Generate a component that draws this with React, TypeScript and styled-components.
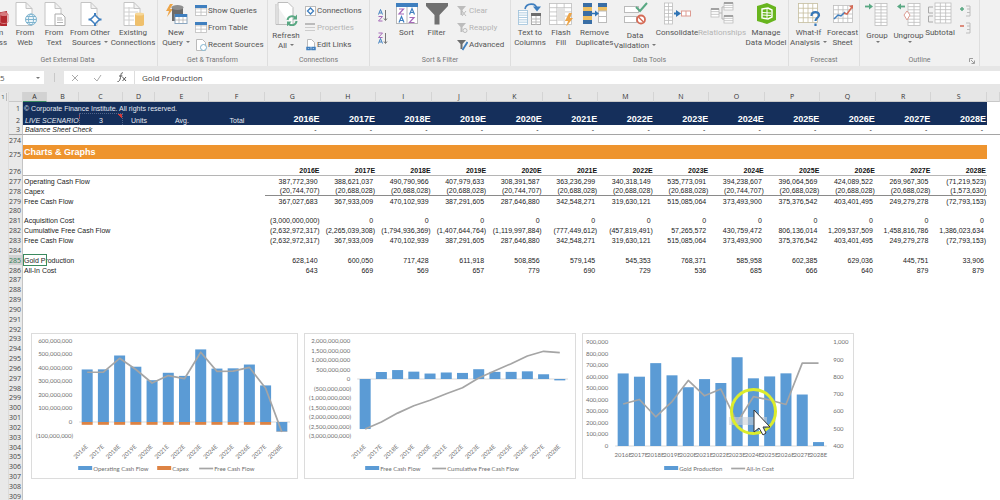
import React from "react";
import styled, { createGlobalStyle, css } from "styled-components";

const GlobalStyle = createGlobalStyle`
  *, *::before, *::after { box-sizing: border-box; }
  body { margin: 0; background: #fff; font-family: Roboto, "Open Sans", sans-serif; color: #555; }
  button, input { font: inherit; color: inherit; border: 0; padding: 0; margin: 0; background: none; }
`;

/* ---------- Shell ---------- */

const Page = styled.div`
  height: 100vh;
  overflow: hidden;
  display: flex;
  flex-direction: column;
`;

const Ribbon = styled.header`
  display: flex;
  flex: none;
  height: 66px;
  background: #f1f1f1;
  overflow: hidden;
`;

const Group = styled.section<{ $w: number; $pull?: boolean }>`
  position: relative;
  display: flex;
  flex-direction: column;
  flex: none;
  width: ${(p) => p.$w}px;
  margin-left: ${(p) => (p.$pull ? -22 : 0)}px;
  border-right: 1px solid #dedede;
`;

const GroupBody = styled.div`
  display: flex;
  height: 55px;
  padding: 2px 0 0 1px;
`;

const GroupTitle = styled.h2`
  margin: 0;
  font-size: 7px;
  line-height: 10px;
  font-weight: 400;
  text-align: center;
  color: #777;
`;

const BigButton = styled.button<{ $w: number; $split?: boolean; $off?: boolean }>`
  display: flex;
  flex-direction: column;
  align-items: center;
  flex: none;
  width: ${(p) => p.$w}px;
  gap: ${(p) => (p.$split ? 5 : 2)}px;
  font-size: 8px;
  line-height: 10px;
  white-space: nowrap;
  color: ${(p) => (p.$off ? "#b4b4b4" : "#555")};
`;

const ButtonText = styled.span`
  display: flex;
  flex-direction: column;
  align-items: center;
`;

const Caret = styled.i`
  display: inline-block;
  margin-left: 3px;
  vertical-align: 2px;
  border: 2px solid transparent;
  border-top-color: #777;
  border-bottom: 0;
`;

const SmallColumn = styled.div<{ $gap?: number }>`
  display: flex;
  flex-direction: column;
  padding-left: ${(p) => p.$gap ?? 2}px;
`;

const SmallButton = styled.button<{ $off?: boolean }>`
  display: flex;
  align-items: center;
  gap: 1px;
  height: 17px;
  font-size: 8px;
  white-space: nowrap;
  color: ${(p) => (p.$off ? "#b4b4b4" : "#555")};
`;

const IconStack = styled.div`
  display: flex;
  flex-direction: column;
  gap: 6px;
  width: 20px;
  padding: 5px 0 0 4px;
`;

const IconButton = styled.button`
  display: block;
  height: 17px;
`;

const Launcher = styled.button`
  position: absolute;
  right: 4px;
  bottom: 2px;
  line-height: 0;
`;

const FormulaBar = styled.div`
  display: flex;
  flex: none;
  height: 26px;
  padding: 5px 0 8px;
  background: #e6e6e6;
  font-family: "Open Sans", sans-serif;
  font-size: 8px;
`;

const NameBox = styled.div`
  display: flex;
  align-items: center;
  width: 44px;
  padding-right: 4px;
  background: #fff;
`;

const NameInput = styled.input`
  flex: 1;
  min-width: 0;
`;

const Grip = styled.span`
  width: 20px;
  margin: 2px 0;
  background: linear-gradient(#c8c8c8, #c8c8c8) center / 1px 100% no-repeat;
`;

const EditTools = styled.div`
  display: flex;
  align-items: center;
  justify-content: space-around;
  width: 71px;
  border-right: 1px solid #ddd;
  background: #fff;
`;

const EditButton = styled.button`
  line-height: 0;
`;

const FormulaInput = styled.input`
  flex: 1;
  min-width: 0;
  padding-left: 7px;
  background: #fff;
  color: #444;
`;

/* ---------- Sheet ---------- */

const Sheet = styled.main`
  position: relative;
  display: flex;
  flex: 1;
  min-height: 0;
`;

const Gutter = styled.aside`
  width: 9px;
  flex: none;
  background: #e9e9e9;
  border-right: 1px solid #dcdcdc;
`;

const LevelButton = styled.button`
  display: block;
  width: 7px;
  height: 8px;
  margin-top: 1px;
  border-right: 1px solid #bbb;
  font-size: 6px;
  line-height: 8px;
`;

const Grid = styled.table`
  flex: 1;
  width: 100%;
  align-self: flex-start;
  table-layout: fixed;
  border-collapse: separate;
  border-spacing: 0;
  font: 7px/9px "Liberation Sans", Arial, sans-serif;
  color: #222;

  th, td { padding: 0; white-space: nowrap; }
`;

const Col = styled.col<{ $w?: number }>`
  ${(p) => p.$w && css`width: ${p.$w}px;`}
`;

const ColHead = styled.th<{ $active?: boolean }>`
  height: 10px;
  font: 400 7px/9px "Open Sans", sans-serif;
  color: #333;
  background: ${(p) => (p.$active ? "#d2d2d2" : "#e6e6e6")};
  border-right: 1px solid #d4d4d4;
  border-bottom: 1px solid ${(p) => (p.$active ? "#3b8a5f" : "#c8c8c8")};
`;

const Row = styled.tr<{ $h?: number }>`
  height: ${(p) => p.$h ?? 10}px;
`;

const RowHead = styled.th<{ $active?: boolean; $frozen?: boolean }>`
  font: 400 7px/9px "Open Sans", sans-serif;
  color: ${(p) => (p.$active ? "#2f7d54" : "#444")};
  background: ${(p) => (p.$active ? "#d2d2d2" : "#e9e9e9")};
  border-right: 1px solid #c4c4c4;
  ${(p) => p.$frozen && css`border-bottom: 1px solid #a5a5a5;`}
  text-align: right;
  vertical-align: bottom;
`;

const Cell = styled.td<{ $tone?: "navy" | "orange"; $align?: string; $line?: string; $strong?: boolean; $italic?: boolean }>`
  vertical-align: bottom;
  text-align: ${(p) => p.$align ?? "left"};
  ${(p) => p.$tone === "navy" && css`background: #152f5b; color: #e6eaf2;`}
  ${(p) => p.$tone === "orange" && css`background: #ee942e; color: #fff;`}
  ${(p) => p.$line && css`border-bottom: 1px solid ${p.$line};`}
  ${(p) => p.$strong && css`font-weight: 700; color: #111;`}
  ${(p) => p.$italic && css`font-style: italic;`}
`;

const Inset = styled.span<{ $l?: number; $r?: number }>`
  padding-left: ${(p) => p.$l ?? 0}px;
  padding-right: ${(p) => p.$r ?? 0}px;
`;

const YearTitle = styled.b`
  padding-right: 1px;
  font-size: 9px;
  line-height: 12px;
  color: #fff;
`;

const SectionTitle = styled.b`
  padding-left: 1px;
  font-size: 9px;
  line-height: 13px;
`;

const ScenarioCell = styled(Cell)`
  background: linear-gradient(225deg, #d33a3a 3px, transparent 3px) #152f5b;
  border: 1px dotted #51668b;
  border-width: 1px 1px 0;
`;

const SelectedCell = styled(Cell)`
  position: relative;

  &::before {
    content: "";
    position: absolute;
    left: 0;
    top: -1px;
    width: 24px;
    height: 12px;
    border: 1px solid #3b8a5f;
  }
`;

/* ---------- Charts ---------- */

const ChartLayer = styled.div`
  position: absolute;
  top: 241px;
  left: 31px;
  right: 146px;
  display: flex;
  gap: 6px;
`;

const ChartCard = styled.figure<{ $grow: number }>`
  flex: ${(p) => p.$grow} 1 0;
  min-width: 0;
  margin: 0;
  height: 146px;
  background: #fff;
  border: 1px solid #dcdcdc;
`;

const ChartSvg = styled.svg`
  display: block;
  width: 100%;
  height: 100%;
  overflow: visible;
  font: 6px Lato, sans-serif;
  fill: #6e6e6e;
`;

const Pointer = styled.svg`
  position: absolute;
  top: 296px;
  left: 729px;
  width: 48px;
  height: 48px;
  pointer-events: none;
`;

/* ---------- Data ---------- */

const years = Array.from({ length: 13 }, (_, i) => `${2016 + i}E`);
const operating = [387772390, 388621037, 490790966, 407979633, 308391587, 363236299, 340318149, 535773091, 394238607, 396064569, 424089522, 269967305, -71219523];
const capex = [-20744707, -20688028, -20688028, -20688028, -20744707, -20688028, -20688028, -20688028, -20744707, -20688028, -20688028, -20688028, -1573630];
const free = [367027683, 367933009, 470102939, 387291605, 287646880, 342548271, 319630121, 515085064, 373493900, 375376542, 403401495, 249279278, -72793153];
const acquisition = [-3000000000, 0, 0, 0, 0, 0, 0, 0, 0, 0, 0, 0, 0];
const cumulative = [-2632972317, -2265039308, -1794936369, -1407644764, -1119997884, -777449612, -457819491, 57265572, 430759472, 806136014, 1209537509, 1458816786, 1386023634];
const freeNet = [-2632972317, ...free.slice(1)];
const gold = [628140, 600050, 717428, 611918, 508856, 579145, 545353, 768371, 585958, 602385, 629036, 445751, 33906];
const allIn = [643, 669, 569, 657, 779, 690, 729, 536, 685, 666, 640, 879, 879];

const fmt = (n: number) => (n < 0 ? `(${Math.abs(n).toLocaleString("en-US")})` : n.toLocaleString("en-US"));

type Line = { n: number; label?: string; values?: number[]; line?: boolean };
const body: Line[] = [
  { n: 277, label: "Operating Cash Flow", values: operating },
  { n: 278, label: "Capex", values: capex, line: true },
  { n: 279, label: "Free Cash Flow", values: free },
  { n: 280 },
  { n: 281, label: "Acquisition Cost", values: acquisition },
  { n: 282, label: "Cumulative Free Cash Flow", values: cumulative },
  { n: 283, label: "Free Cash Flow", values: freeNet },
  { n: 284 },
  { n: 285, label: "Gold Production", values: gold },
  { n: 286, label: "All-In Cost", values: allIn },
  ...Array.from({ length: 23 }, (_, i) => ({ n: 287 + i })),
];
const shortRows = [280, 287, 293, 299, 305];

/* ---------- Icons ---------- */

const Icon = ({ w = 26, h = 24, children }: { w?: number; h?: number; children: React.ReactNode }) => (
  <svg width={w} height={h} viewBox={`0 0 ${w} ${h}`} fill="none" aria-hidden="true">{children}</svg>
);

const Paper = () => <path d="M4 .5h10l6 6V23.500H4zM14 .5v6h6" fill="#fff" stroke="#c4c4c4" />;

const Lines = ({ x, y, w, h, c = "#bdbdbd", cols = 3, rows = 5 }: { x: number; y: number; w: number; h: number; c?: string; cols?: number; rows?: number }) => (
  <g stroke={c} strokeWidth="0.8">
    <rect x={x} y={y} width={w} height={h} fill="#fff" />
    {Array.from({ length: cols - 1 }, (_, i) => <path key={`c${i}`} d={`M${x + ((i + 1) * w) / cols} ${y}v${h}`} />)}
    {Array.from({ length: rows - 1 }, (_, i) => <path key={`r${i}`} d={`M${x} ${y + ((i + 1) * h) / rows}h${w}`} />)}
  </g>
);

const AccessIcon = () => <Icon w={30}><path d="M6 .5h13v23H6z" fill="#fff" stroke="#c4c4c4" /><path d="M16 11l12-2v16l-12-2z" fill="#b2282e" /><ellipse cx="25" cy="12" rx="4" ry="2" fill="#d67a7e" /><path d="M21 12v8c1 2 7 2 8 0v-8" stroke="#d67a7e" /></Icon>;
const WebIcon = () => <Icon><Paper /><g stroke="#7fb4cf"><circle cx="19" cy="17.500" r="5.500" fill="#eef6fa" /><ellipse cx="19" cy="17.500" rx="2.500" ry="5.500" /><path d="M13.500 17.500h11M14.500 14.500h9M14.500 20.500h9" /></g></Icon>;
const TextIcon = () => <Icon><Paper /><path d="M14 12h7l3 3v8.500H14z" fill="#fff" stroke="#aaa" /><path d="M16 16h5M16 18h6M16 20.500h6" stroke="#b5b5b5" /></Icon>;
const SourcesIcon = () => <Icon><Paper /><path d="M18 11v13M11.500 17.500h13" stroke="#3f7fbf" strokeWidth="2" /><path d="M18 13l4.500 4.500L18 22l-4.500-4.500z" fill="#fff" stroke="#3f7fbf" strokeWidth="1.500" /></Icon>;
const ExistingIcon = () => <Icon><Paper /><path d="M4 6h10M4 10h14M4 14h10M4 18h10M9 5v18" stroke="#d0d0d0" /><path d="M15 12h9v11h-9z" fill="#efc06c" /><ellipse cx="19.500" cy="12" rx="4.500" ry="1.500" fill="#f6d798" /><ellipse cx="19.500" cy="22.500" rx="4.500" ry="1.500" fill="#efc06c" /></Icon>;
const QueryIcon = () => <Icon><path d="M7 2L3 9h3l-2 6 6-8H7l3-5z" fill="#eda548" /><path d="M9 6h11v13H9z" fill="#6b6b6b" /><ellipse cx="14.500" cy="5.500" rx="6" ry="2.500" fill="#8e8e8e" /><rect x="12" y="12.500" width="12" height="9" fill="#fff" stroke="#8aa6c0" /><path d="M12 12h12v3H12z" fill="#3f7fbf" /><path d="M12 18h12M16 15v6M20 15v6" stroke="#aaa" strokeWidth=".7" /></Icon>;
const RefreshIcon = () => <Icon><path d="M5 .5h10l5 5v17H5zM3 2v20.500h14" fill="#fff" stroke="#bdbdbd" /><path d="M14.500 18a4.500 4.500 0 0 1 8-2M23.500 19a4.500 4.500 0 0 1-8 2.500" stroke="#59a883" strokeWidth="2" /><path d="M24 12.500v5h-4.500zM14 24.500v-5h4.500z" fill="#59a883" /></Icon>;
const SortIcon = () => <Icon><rect x="2.500" y="1.500" width="21" height="20" fill="#fff" stroke="#b7b7b7" /><path d="M2 1h22v4H2z" fill="#3f7fbf" /><path d="M13 5v17" stroke="#b7b7b7" /><g strokeWidth="1.200"><path d="M5 7h4.500L5 12h5M15.500 15.500H20l-4.500 5h5" stroke="#a569b8" /><path d="M5 20.500l2.500-6 2.500 6M6 18.500h3M15.500 12.500l2.500-6 2.500 6M16.500 10.500h3" stroke="#3f7fbf" /></g></Icon>;
const FilterIcon = () => <Icon><path d="M2 1h22v3l-8.500 9v9.500h-5V13L2 4z" fill="#707070" /></Icon>;
const ColumnsIcon = () => <Icon w={28}><Lines x={2.5} y={8.5} w={9} h={14} c="#9cc0da" cols={1} rows={6} /><rect x="15.500" y="11.500" width="9" height="11" fill="#fff" stroke="#aaa" /><path d="M15 11h10v3H15z" fill="#6d6d6d" /><path d="M15 17h10M15 20h10M20 14v9" stroke="#bbb" /><path d="M9 7c1-6 11-7 12 0" stroke="#3f7fbf" strokeWidth="1.600" /><path d="M17 4.500h8l-4 5z" fill="#3f7fbf" /></Icon>;
const FlashIcon = () => <Icon><Lines x={1.5} y={1.5} w={22} h={21} cols={3} rows={5} /><path d="M9 6h8v13H9z" fill="#e3e3e3" /><path d="M21 11l-4 8h3l-2 6 7-9h-3l2-5z" fill="#eda548" /></Icon>;
const DuplicatesIcon = () => <Icon><path d="M1 1h9v21H1zM16 1h9v4h-9z" fill="#3a6ea5" /><path d="M1 5h9v4H1zM1 14h9v4H1zM16 5h9v4h-9z" fill="#eebf62" /><rect x="16.500" y="9" width="8" height="11.500" fill="#fff" stroke="#bbb" /><path d="M16 14.500h9" stroke="#bbb" /><path d="M9 11.500h6" stroke="#2f74b5" strokeWidth="1.500" /><path d="M13 8.500l4 3-4 3z" fill="#2f74b5" /></Icon>;
const ValidationIcon = () => <Icon><rect x="2.500" y="4.500" width="14" height="6" fill="#fff" stroke="#bbb" /><rect x="2.500" y="14.500" width="12" height="6" fill="#fff" stroke="#bbb" /><path d="M14 5l4 4 7-8" stroke="#59a883" strokeWidth="2" /><circle cx="19" cy="17.500" r="4" fill="#fff" stroke="#d56a55" strokeWidth="1.800" /><path d="M16.500 15l5 5" stroke="#d56a55" strokeWidth="1.500" /></Icon>;
const ConsolidateIcon = () => <Icon w={30}><Lines x={2.5} y={1} w={8} h={21} cols={2} rows={6} /><path d="M12 11.500h4" stroke="#2f74b5" strokeWidth="2" /><path d="M14 8l5 3.500-5 3.500z" fill="#2f74b5" /><rect x="19.500" y="9" width="9" height="5" fill="#fff" stroke="#dd9b92" /><path d="M24 9v5" stroke="#dd9b92" /></Icon>;
const RelationsIcon = () => <Icon><Lines x={2} y={7} w={8} h={8} cols={1} rows={3} /><Lines x={15} y={1} w={9} h={7} cols={1} rows={3} /><Lines x={15} y={14} w={9} h={7} cols={1} rows={3} /><path d="M2 7h8M15 1h9M15 14h9" stroke="#a2a2a2" strokeWidth="2" /><path d="M10 11h3V5h2M13 11v6h2" stroke="#b5b5b5" /></Icon>;
const ModelIcon = () => <Icon><path d="M4 4l10-3 9 4v13l-9 4-10-3z" fill="#68b51e" /><path d="M9 7l6-1 4 2v7l-4 2-6-1z" stroke="#fff" strokeWidth="1.400" /><path d="M9 10.500l9 .5M9 13l9 .5M14 6v10" stroke="#fff" /></Icon>;
const WhatIfIcon = () => <Icon><Lines x={2.5} y={1.5} w={19} h={19} c="#c5bd9e" cols={4} rows={4} /><path d="M15.500 14c0-5 8-5 7.500-.5-.3 2.500-3.500 2.500-3.500 5.500M19.500 21.500v2.500" stroke="#3778b8" strokeWidth="2.200" /></Icon>;
const ForecastIcon = () => <Icon><Lines x={3.5} y={3.5} w={19} h={17} cols={4} rows={4} /><path d="M4 17l4-4 3 1 4-4" stroke="#3f7fbf" strokeWidth="1.500" /><path d="M14 11l3 1 5-7" stroke="#d56a55" strokeWidth="1.500" /><path d="M19 4l4-1v4z" fill="#d56a55" /></Icon>;
const GroupIcon = () => <Icon><Lines x={11} y={1.5} w={12} h={22} cols={2} rows={7} /><path d="M1 4.500h5" stroke="#59a883" strokeWidth="1.800" /><path d="M5 1.500l4 3-4 3z" fill="#59a883" /></Icon>;
const UngroupIcon = () => <Icon><Lines x={12} y={1.5} w={12} h={22} cols={2} rows={7} /><path d="M4 4.500h5" stroke="#59a883" strokeWidth="1.800" /><path d="M5 1.500l-4 3 4 3z" fill="#59a883" /><path d="M8 13l3-4 3 4-3 5z" fill="#fff" stroke="#dd9b92" /></Icon>;
const SubtotalIcon = () => <Icon><Lines x={8} y={1} w={16} h={20} cols={3} rows={6} /><path d="M6 5H1.500v6H6M6 14H1.500v6H6" stroke="#aaa" /></Icon>;

const TableIcon = () => <Icon w={12} h={11}><Lines x={0.5} y={0.5} w={11} h={10} cols={2} rows={3} /><path d="M0 0h12v3H0z" fill="#3f7fbf" /></Icon>;
const RecentIcon = () => <Icon w={12} h={12}><path d="M1.500.5h6l3 3v8h-9z" fill="#fff" stroke="#bbb" /><circle cx="8.500" cy="8.500" r="3" fill="#fff" stroke="#7fb4cf" /></Icon>;
const LinkIcon = () => <Icon w={11} h={10}><rect x=".5" y=".5" width="10" height="9" fill="#fff" stroke="#bbb" /><path d="M5.500 2l3 3-3 3-3-3z" stroke="#3f7fbf" strokeWidth="1.300" /></Icon>;
const PropIcon = () => <Icon w={11} h={10}><path d="M0 1h10" stroke="#bbb" strokeWidth="2" /><path d="M0 4.500h10M0 7.500h10" stroke="#ccc" /></Icon>;
const EditIcon = () => <Icon w={11} h={12}><path d="M2.500.5h4l3 3v7h-7z" fill="#fff" stroke="#bbb" /><path d="M2 8.500h3v2H2zM7 8.500h3v2H7z" stroke="#3f7fbf" strokeWidth="1.500" /></Icon>;
const Funnel = ({ color, mark }: { color: string; mark: React.ReactNode }) => <Icon w={11} h={12}><path d="M0 1h9L5.500 5v5h-2V5z" fill={color} />{mark}</Icon>;
const AzIcon = ({ up }: { up?: boolean }) => (
  <Icon w={10} h={13}>
    <g transform={up ? "translate(0 6)" : undefined}><path d="M.5 5.500l2-5 2 5M1.500 4h2" stroke="#3f7fbf" /></g>
    <g transform={up ? "translate(0 -6.500)" : undefined}><path d="M.5 7.500h4l-4 4.500h4" stroke="#a569b8" /></g>
    <path d="M7.500 1v10M6 9.500l1.500 2L9 9.500" stroke="#777" />
  </Icon>
);
const DetailIcon = ({ plus }: { plus?: boolean }) => <Icon w={12} h={12}><path d={plus ? "M0 4h4M2 2v4" : "M0 4h4"} stroke={plus ? "#59a883" : "#d56a55"} strokeWidth="1.500" /><path d="M6 1h4v10H6M7 4h3M7 7.500h3" stroke="#bdbdbd" /></Icon>;

/* ---------- Ribbon pieces ---------- */

type BigProps = { w: number; lines: string[]; icon: React.ReactNode; split?: boolean; caret?: boolean; off?: boolean };
const Big = ({ w, lines, icon, split, caret, off }: BigProps) => (
  <BigButton type="button" $w={w} $split={split} $off={off} disabled={off}>
    {icon}
    <ButtonText>
      {lines.map((t, i) => <span key={t}>{t}{caret && i === lines.length - 1 && <Caret />}</span>)}
      {split && !caret && <Caret />}
    </ButtonText>
  </BigButton>
);

/* ---------- Chart pieces ---------- */

const BLUE = "#5b9bd5";
const ORANGE = "#dd8344";
const GREY = "#a5a5a5";

type ChartProps = {
  title: string;
  grow: number;
  width: number;
  x0: number;
  step: number;
  zero: number;
  unit: number;
  ticks: number[];
  tickX: number;
  bars: number[];
  under?: number[];
  line: number[];
  lineY?: (v: number) => number;
  slanted?: boolean;
  labelY: number;
  right?: { x: number; ticks: number[] };
  legend: { x: number; label: string; color: string; line?: boolean }[];
};

const Chart = (c: ChartProps) => {
  const y = (v: number) => c.zero - v * c.unit;
  const ly = c.lineY ?? y;
  return (
    <ChartCard $grow={c.grow}>
      <ChartSvg viewBox={`0 0 ${c.width} 144`} role="img" aria-label={c.title}>
        {c.ticks.map((t) => <text key={t} x={c.tickX + (t < 0 ? 1 : 0)} y={y(t) + 2} textAnchor="end">{fmt(t)}</text>)}
        {c.right?.ticks.map((t) => <text key={t} x={c.right!.x} y={ly(t) + 2}>{fmt(t)}</text>)}
        <path d={`M${c.x0 - 8} ${c.zero}h${c.step * 13}`} stroke="#d9d9d9" />
        {c.bars.map((v, i) => <rect key={i} x={c.x0 + i * c.step - 5.5} y={Math.min(y(v), c.zero)} width="11" height={Math.abs(v * c.unit)} fill={BLUE} />)}
        {c.under?.map((v, i) => (
          <rect key={i} x={c.x0 + i * c.step - 5.5} y={c.bars[i] < 0 ? y(c.bars[i]) : c.zero} width="11" height={Math.abs(v * c.unit)} fill={ORANGE} />
        ))}
        <polyline points={c.line.map((v, i) => `${c.x0 + i * c.step},${ly(v)}`).join(" ")} fill="none" stroke={GREY} strokeWidth="1.700" strokeLinejoin="round" />
        {years.map((t, i) => {
          const x = c.x0 + i * c.step;
          return c.slanted
            ? <text key={t} textAnchor="end" transform={`translate(${x + 1} ${c.labelY}) rotate(-45)`}>{t}</text>
            : <text key={t} x={x} y={c.labelY} textAnchor="middle">{t}</text>;
        })}
        {c.legend.map((l) => (
          <g key={l.label}>
            {l.line
              ? <path d={`M${l.x} 134.500h14`} stroke={l.color} strokeWidth="1.700" />
              : <rect x={l.x} y="132" width="14" height="4" fill={l.color} />}
            <text x={l.x + 15} y="136.500">{l.label}</text>
          </g>
        ))}
      </ChartSvg>
    </ChartCard>
  );
};

const range = (from: number, to: number, by: number) => Array.from({ length: Math.round((to - from) / by) + 1 }, (_, i) => from + i * by);

export default function App() {
  return (
    <Page>
      <GlobalStyle />
      <Ribbon>
        <Group $w={180} $pull>
          <GroupBody>
            <Big w={30} lines={["From", "Access"]} icon={<AccessIcon />} />
            <Big w={32} lines={["From", "Web"]} icon={<WebIcon />} />
            <Big w={26} lines={["From", "Text"]} icon={<TextIcon />} />
            <Big w={46} lines={["From Other", "Sources"]} icon={<SourcesIcon />} caret />
            <Big w={40} lines={["Existing", "Connections"]} icon={<ExistingIcon />} />
          </GroupBody>
          <GroupTitle>Get External Data</GroupTitle>
        </Group>
        <Group $w={110}>
          <GroupBody>
            <Big w={34} lines={["New", "Query"]} icon={<QueryIcon />} caret />
            <SmallColumn>
              <SmallButton type="button"><TableIcon />Show Queries</SmallButton>
              <SmallButton type="button"><TableIcon />From Table</SmallButton>
              <SmallButton type="button"><RecentIcon />Recent Sources</SmallButton>
            </SmallColumn>
          </GroupBody>
          <GroupTitle>Get &amp; Transform</GroupTitle>
        </Group>
        <Group $w={102}>
          <GroupBody>
            <Big w={34} lines={["Refresh", "All"]} icon={<RefreshIcon />} split caret />
            <SmallColumn>
              <SmallButton type="button"><LinkIcon />Connections</SmallButton>
              <SmallButton type="button" $off disabled><PropIcon />Properties</SmallButton>
              <SmallButton type="button"><EditIcon />Edit Links</SmallButton>
            </SmallColumn>
          </GroupBody>
          <GroupTitle>Connections</GroupTitle>
        </Group>
        <Group $w={141}>
          <GroupBody>
            <IconStack>
              <IconButton type="button" aria-label="Sort A to Z"><AzIcon /></IconButton>
              <IconButton type="button" aria-label="Sort Z to A"><AzIcon up /></IconButton>
            </IconStack>
            <Big w={31} lines={["Sort"]} icon={<SortIcon />} />
            <Big w={29} lines={["Filter"]} icon={<FilterIcon />} />
            <SmallColumn $gap={6}>
              <SmallButton type="button" $off disabled><Funnel color="#bcbcbc" mark={<path d="M5 6l4 5M9 6l-4 5" stroke="#bcbcbc" />} />Clear</SmallButton>
              <SmallButton type="button" $off disabled><Funnel color="#bcbcbc" mark={<circle cx="8" cy="8.500" r="2" stroke="#bcbcbc" />} />Reapply</SmallButton>
              <SmallButton type="button"><Funnel color="#6d6d6d" mark={<path d="M10.500 3l-5 8" stroke="#3f7fbf" strokeWidth="1.800" />} />Advanced</SmallButton>
            </SmallColumn>
          </GroupBody>
          <GroupTitle>Sort &amp; Filter</GroupTitle>
        </Group>
        <Group $w={278}>
          <GroupBody>
            <Big w={36} lines={["Text to", "Columns"]} icon={<ColumnsIcon />} />
            <Big w={26} lines={["Flash", "Fill"]} icon={<FlashIcon />} />
            <Big w={41} lines={["Remove", "Duplicates"]} icon={<DuplicatesIcon />} />
            <Big w={40} lines={["Data", "Validation"]} icon={<ValidationIcon />} split caret />
            <Big w={44} lines={["Consolidate"]} icon={<ConsolidateIcon />} />
            <Big w={46} lines={["Relationships"]} icon={<RelationsIcon />} off />
            <Big w={42} lines={["Manage", "Data Model"]} icon={<ModelIcon />} />
          </GroupBody>
          <GroupTitle>Data Tools</GroupTitle>
        </Group>
        <Group $w={71}>
          <GroupBody>
            <Big w={37} lines={["What-If", "Analysis"]} icon={<WhatIfIcon />} caret />
            <Big w={31} lines={["Forecast", "Sheet"]} icon={<ForecastIcon />} />
          </GroupBody>
          <GroupTitle>Forecast</GroupTitle>
        </Group>
        <Group $w={120}>
          <GroupBody>
            <Big w={32} lines={["Group"]} icon={<GroupIcon />} split />
            <Big w={31} lines={["Ungroup"]} icon={<UngroupIcon />} split />
            <Big w={32} lines={["Subtotal"]} icon={<SubtotalIcon />} />
            <SmallColumn $gap={4}>
              <IconButton type="button" aria-label="Show detail"><DetailIcon plus /></IconButton>
              <IconButton type="button" aria-label="Hide detail"><DetailIcon /></IconButton>
            </SmallColumn>
          </GroupBody>
          <GroupTitle>Outline</GroupTitle>
          <Launcher type="button" aria-label="Outline settings"><Icon w={6} h={6}><path d="M.5 4V.5H4M2 2l3 3M5.500 2.500v3h-3" stroke="#888" strokeWidth=".8" /></Icon></Launcher>
        </Group>
      </Ribbon>

      <FormulaBar>
        <NameBox><NameInput aria-label="Name box" defaultValue="5" /><Caret /></NameBox>
        <Grip />
        <EditTools>
          <EditButton type="button" aria-label="Cancel"><Icon w={8} h={8}><path d="M1 1l6 6M7 1L1 7" stroke="#aaa" /></Icon></EditButton>
          <EditButton type="button" aria-label="Enter"><Icon w={9} h={8}><path d="M1 4l3 3 4-6" stroke="#aaa" /></Icon></EditButton>
          <EditButton type="button" aria-label="Insert function"><Icon w={10} h={11}><path d="M6 1C4 0 4 3 3.500 5.500S2 10 .5 9.500M2 4h3.500M5.500 5l3.500 4M9 5L5.500 9" stroke="#555" /></Icon></EditButton>
        </EditTools>
        <FormulaInput aria-label="Formula" defaultValue="Gold Production" />
      </FormulaBar>

      <Sheet>
        <Gutter><LevelButton type="button">1</LevelButton></Gutter>
        <Grid>
          <colgroup>
            {[14, 24, 32, 44, 32, 54, 56].map((w, i) => <Col key={i} $w={w} />)}
            {years.map((y) => <Col key={y} />)}
            <Col $w={13} />
          </colgroup>
          <thead>
            <tr>
              <ColHead />
              {"ABCDEFGHIJKLMNOPQRS".split("").map((l) => <ColHead key={l} scope="col" $active={l === "A"}>{l}</ColHead>)}
              <ColHead />
            </tr>
          </thead>
          <tbody>
            <Row $h={11}>
              <RowHead scope="row"><Inset $r={2}>1</Inset></RowHead>
              <Cell $tone="navy" colSpan={19}><Inset $l={1}>© Corporate Finance Institute. All rights reserved.</Inset></Cell>
              <td />
            </Row>
            <Row $h={12}>
              <RowHead scope="row"><Inset $r={2}>2</Inset></RowHead>
              <Cell $tone="navy" $italic colSpan={2}><Inset $l={2}>LIVE SCENARIO</Inset></Cell>
              <ScenarioCell $tone="navy" $align="center">3</ScenarioCell>
              <Cell $tone="navy" $align="center">Units</Cell>
              <Cell $tone="navy" $align="center">Avg.</Cell>
              <Cell $tone="navy" $align="center">Total</Cell>
              {years.map((y) => <Cell key={y} $tone="navy" $align="right"><YearTitle>{y}</YearTitle></Cell>)}
              <td />
            </Row>
            <Row>
              <RowHead scope="row" $frozen><Inset $r={2}>3</Inset></RowHead>
              <Cell $italic $line="#a5a5a5" colSpan={6}><Inset $l={2}>Balance Sheet Check</Inset></Cell>
              {years.map((y) => <Cell key={y} $align="right" $line="#a5a5a5"><Inset $r={4}>-</Inset></Cell>)}
              <Cell $line="#a5a5a5" />
            </Row>
            <Row>
              <RowHead scope="row"><Inset $r={1}>274</Inset></RowHead>
              <td colSpan={20} />
            </Row>
            <Row $h={14}>
              <RowHead scope="row"><Inset $r={1}>275</Inset></RowHead>
              <Cell $tone="orange" colSpan={19}><SectionTitle>Charts &amp; Graphs</SectionTitle></Cell>
              <td />
            </Row>
            <Row $h={17}>
              <RowHead scope="row"><Inset $r={1}>276</Inset></RowHead>
              <Cell $line="#b5b5b5" colSpan={6} />
              {years.map((y) => <Cell key={y} $align="right" $line="#b5b5b5" $strong><Inset $r={1}>{y}</Inset></Cell>)}
              <td />
            </Row>
            {body.map((r) => {
              const Label = r.n === 285 ? SelectedCell : Cell;
              return (
                <Row key={r.n} $h={shortRows.includes(r.n) ? 9 : 10}>
                  <RowHead scope="row" $active={r.n === 285}><Inset $r={1}>{r.n}</Inset></RowHead>
                  {r.values ? (
                    <>
                      <Label colSpan={6}><Inset $l={1}>{r.label}</Inset></Label>
                      {r.values.map((v, i) => (
                        <Cell key={i} $align="right" $line={r.line ? "#8a8a8a" : undefined}><Inset $r={v < 0 ? 1 : 3}>{fmt(v)}</Inset></Cell>
                      ))}
                      <td />
                    </>
                  ) : <td colSpan={20} />}
                </Row>
              );
            })}
          </tbody>
        </Grid>

        <ChartLayer>
          <Chart title="Operating cash flow, capex and free cash flow" grow={267} width={265}
            x0={55} step={16.22} zero={88} unit={1.355e-7} ticks={range(-1e8, 6e8, 1e8)} tickX={40}
            bars={operating} under={capex} line={free} slanted labelY={113}
            legend={[{ x: 46, label: "Operating Cash Flow", color: BLUE }, { x: 125, label: "Capex", color: ORANGE }, { x: 167, label: "Free Cash Flow", color: GREY, line: true }]} />
          <Chart title="Free cash flow and cumulative free cash flow" grow={271} width={269}
            x0={60} step={16.22} zero={45} unit={1.9e-8} ticks={range(-3e9, 2e9, 5e8)} tickX={45}
            bars={freeNet} line={cumulative} slanted labelY={113}
            legend={[{ x: 60, label: "Free Cash Flow", color: BLUE }, { x: 127, label: "Cumulative Free Cash Flow", color: GREY, line: true }]} />
          <Chart title="Gold production and all-in cost" grow={272} width={270}
            x0={40} step={16.28} zero={112} unit={1.155e-4} ticks={range(0, 9e5, 1e5)} tickX={25}
            bars={gold} line={allIn} lineY={(v) => 112 - (v - 400) * 0.173} labelY={123}
            right={{ x: 250, ticks: range(400, 1000, 100) }}
            legend={[{ x: 81, label: "Gold Production", color: BLUE }, { x: 148, label: "All-In Cost", color: GREY, line: true }]} />
        </ChartLayer>

        <Pointer viewBox="0 0 48 48" fill="none" aria-hidden="true">
          <path d="M0 29h38v8H0z" fill="#c9ced6" opacity=".6" />
          <circle cx="24.500" cy="23.500" r="22" stroke="#dcec2c" strokeWidth="3" />
          <path d="M25 22v22l5-4 4 7 3-2-3-6h7z" fill="#fff" stroke="#333" />
        </Pointer>
      </Sheet>
    </Page>
  );
}
